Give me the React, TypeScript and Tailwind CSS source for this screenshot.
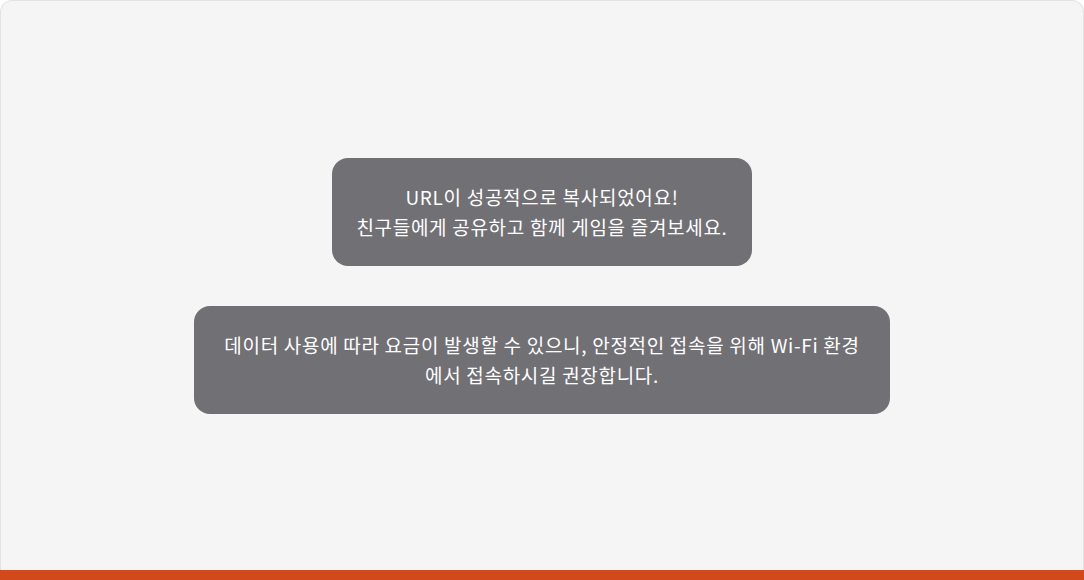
export default function App() {
  return (
    <div
      className="w-[1084px] h-[580px] bg-white flex flex-col"
      style={{ fontFamily: '"Noto Sans CJK KR", "Noto Sans", sans-serif' }}
    >
      {/* Main panel */}
      <div className="flex-1 bg-[#f5f5f5] border border-b-0 border-[#e3e3e3] rounded-t-xl flex flex-col items-center justify-center gap-10">
        <div className="bg-[#717075] rounded-2xl px-6 py-6 text-white text-[19px] leading-[30px] tracking-[0.7px] text-center">
          URL이 성공적으로 복사되었어요!
          <br />
          친구들에게 공유하고 함께 게임을 즐겨보세요.
        </div>
        <div className="bg-[#717075] rounded-2xl w-[696px] py-6 text-white text-[19px] leading-[30px] tracking-[0.7px] text-center">
          데이터 사용에 따라 요금이 발생할 수 있으니, 안정적인 접속을 위해 Wi-Fi 환경
          <br />
          에서 접속하시길 권장합니다.
        </div>
      </div>
      {/* Bottom accent bar */}
      <div className="h-[10px] bg-[#d24a1b]" />
    </div>
  );
}
